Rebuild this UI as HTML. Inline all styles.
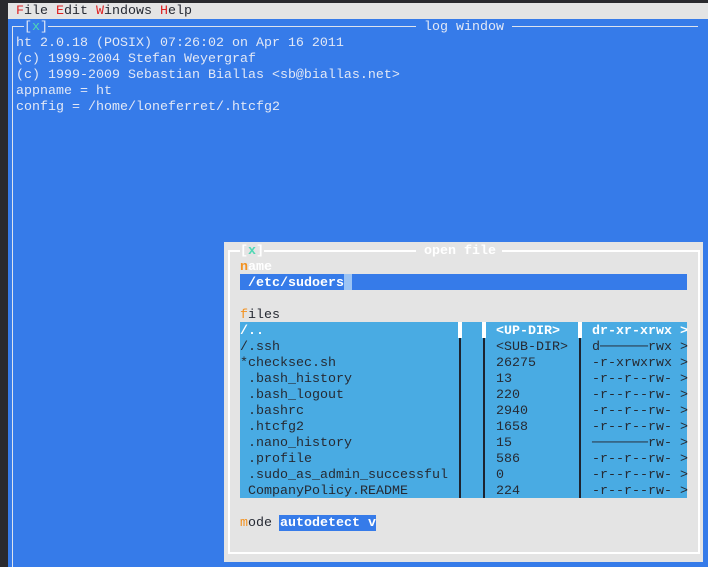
<!DOCTYPE html>
<html><head><meta charset="utf-8"><style>
*{margin:0;padding:0;box-sizing:border-box}
body{width:708px;height:567px;background:#2a2a2e;position:relative;overflow:hidden;font-family:"Liberation Mono","DejaVu Sans Mono",monospace;font-size:13.33px;}
.a{position:absolute;white-space:pre;line-height:16px;height:16px;margin-top:2px}
.b{position:absolute}
.lt{color:#e2e8f6}
.dk{color:#262a33}
.w{color:#fff;font-weight:bold}
.r{color:#d22}
.o{color:#f39220}
.g{color:#4fd8b4}
</style></head><body>
<div class="b" style="left:8px;top:3px;width:700px;height:16px;background:#e4e4e4"></div>
<div class="a dk" style="left:16px;top:2px"><span class="r">F</span>ile <span class="r">E</span>dit <span class="r">W</span>indows <span class="r">H</span>elp</div>
<div class="b" style="left:8px;top:19px;width:700px;height:548px;background:#367be9"></div>
<div class="b" style="left:12px;top:26px;width:12px;height:1px;background:#dde3ee"></div>
<div class="b" style="left:48px;top:26px;width:368px;height:1px;background:#dde3ee"></div>
<div class="b" style="left:512px;top:26px;width:186px;height:1px;background:#dde3ee"></div>
<div class="b" style="left:12px;top:26px;width:1px;height:541px;background:#dde3ee"></div>
<div class="a lt" style="left:24px;top:18px">[<span class="g">x</span>]</div>
<div class="a lt" style="left:416px;top:18px"> log window </div>
<div class="a lt" style="left:16px;top:34px">ht 2.0.18 (POSIX) 07:26:02 on Apr 16 2011
(c) 1999-2004 Stefan Weyergraf
(c) 1999-2009 Sebastian Biallas &lt;sb@biallas.net&gt;
appname = ht
config = /home/loneferret/.htcfg2</div>
<div class="b" style="left:224px;top:242px;width:479px;height:320px;background:#e4e4e4"></div>
<div class="b" style="left:228px;top:250px;width:12px;height:2px;background:#fff"></div>
<div class="b" style="left:264px;top:250px;width:152px;height:2px;background:#fff"></div>
<div class="b" style="left:502px;top:250px;width:198px;height:2px;background:#fff"></div>
<div class="b" style="left:228px;top:250px;width:2px;height:304px;background:#fff"></div>
<div class="b" style="left:698px;top:250px;width:2px;height:304px;background:#fff"></div>
<div class="b" style="left:228px;top:552px;width:472px;height:2px;background:#fff"></div>
<div class="a w" style="left:240px;top:242px">[<span class="g">x</span>]</div>
<div class="a w" style="left:416px;top:242px"> open file </div>
<div class="a" style="left:240px;top:258px;color:#fff;font-weight:bold"><span class="o">n</span>ame</div>
<div class="b" style="left:240px;top:274px;width:447px;height:16px;background:#367be9"></div>
<div class="b" style="left:344px;top:274px;width:8px;height:16px;background:#9cc4f4"></div>
<div class="a w" style="left:240px;top:274px"> /etc/sudoers</div>
<div class="a dk" style="left:240px;top:306px"><span class="o">f</span>iles</div>
<div class="b" style="left:240px;top:322px;width:447px;height:176px;background:#49abe3"></div>
<div class="b" style="left:459px;top:322px;width:2px;height:176px;background:#1d2430"></div>
<div class="b" style="left:483px;top:322px;width:2px;height:176px;background:#1d2430"></div>
<div class="b" style="left:579px;top:322px;width:2px;height:176px;background:#1d2430"></div>
<div class="b" style="left:458px;top:322px;width:4px;height:16px;background:#fff"></div>
<div class="b" style="left:482px;top:322px;width:4px;height:16px;background:#fff"></div>
<div class="b" style="left:578px;top:322px;width:4px;height:16px;background:#fff"></div>
<div class="a w" style="left:240px;top:322px">/..</div>
<div class="a w" style="left:496px;top:322px">&lt;UP-DIR&gt;</div>
<div class="a w" style="left:592px;top:322px">dr-xr-xrwx &gt;</div>
<div class="a dk" style="left:240px;top:338px">/.ssh
*checksec.sh
 .bash_history
 .bash_logout
 .bashrc
 .htcfg2
 .nano_history
 .profile
 .sudo_as_admin_successful
 CompanyPolicy.README</div>
<div class="a dk" style="left:496px;top:338px">&lt;SUB-DIR&gt;
26275
13
220
2940
1658
15
586
0
224</div>
<div class="a dk" style="left:592px;top:338px">d──────rwx &gt;
-r-xrwxrwx &gt;
-r--r--rw- &gt;
-r--r--rw- &gt;
-r--r--rw- &gt;
-r--r--rw- &gt;
───────rw- &gt;
-r--r--rw- &gt;
-r--r--rw- &gt;
-r--r--rw- &gt;</div>
<div class="a dk" style="left:240px;top:514px"><span class="o">m</span>ode</div>
<div class="b" style="left:279px;top:515px;width:97px;height:16px;background:#367be9"></div>
<div class="a w" style="left:280px;top:514px">autodetect v</div>
</body></html>
